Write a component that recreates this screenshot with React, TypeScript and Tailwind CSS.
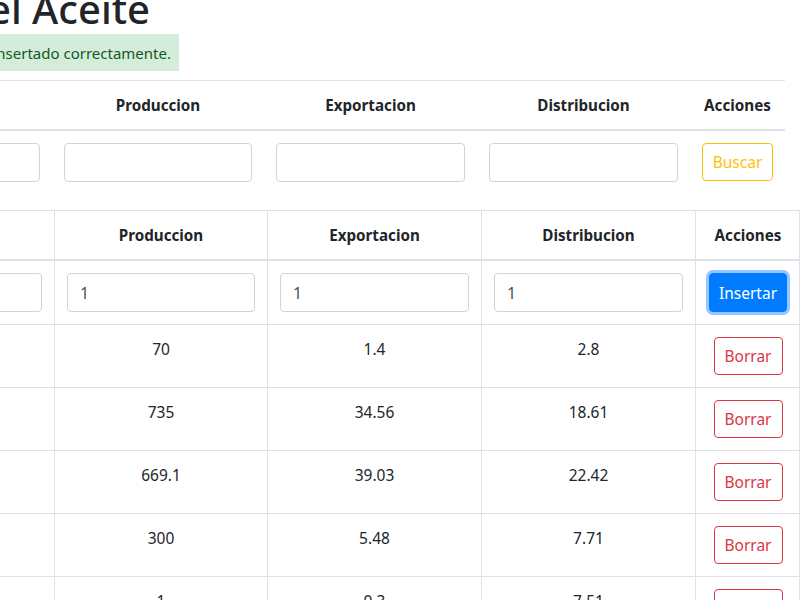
import React from "react";

const font = { fontFamily: '"Segoe UI", "Noto Sans", "Liberation Sans", sans-serif' };

const rows = [
  ["70", "1.4", "2.8"],
  ["735", "34.56", "18.61"],
  ["669.1", "39.03", "22.42"],
  ["300", "5.48", "7.71"],
  ["1", "0.3", "7.51"],
];

const Input = ({ value = "" }: { value?: string }) => (
  <input
    readOnly
    value={value}
    className="h-[39px] w-full rounded-[4px] border border-[#ced4da] bg-white px-3 text-[16px] text-[#495057] outline-none"
  />
);

const App = () => {
  return (
    <div style={font} className="h-[600px] w-[800px] overflow-hidden bg-white text-[15.5px] leading-6 text-[#212529]">
      {/* title, cut at the left edge */}
      <div className="-mt-[15px] flex w-[150px] justify-end overflow-hidden whitespace-nowrap">
        <h1 className="text-[40px] font-medium leading-[48px]">Datos del Aceite</h1>
      </div>

      <div className="mt-[1px] flex h-[37px] w-[179px] items-center justify-end overflow-hidden whitespace-nowrap bg-[#d4edda] pr-2 text-[15px] text-[#155724]">
        Dato insertado correctamente.
      </div>

      {/* search table */}
      <div className="mt-[9px] w-[785px] border-t border-[#dee2e6]">
        <div className="grid grid-cols-[52px_212px_213px_213px_95px] border-b-2 border-[#dee2e6] text-[15.2px] font-bold">
          <div className="h-[48px]" />
          <div className="flex h-[48px] items-center justify-center">Produccion</div>
          <div className="flex h-[48px] items-center justify-center">Exportacion</div>
          <div className="flex h-[48px] items-center justify-center">Distribucion</div>
          <div className="flex h-[48px] items-center justify-center">Acciones</div>
        </div>
        <div className="grid grid-cols-[52px_212px_213px_213px_95px] py-3">
          <div className="flex justify-end overflow-hidden pr-3">
            <div className="w-[188px] shrink-0">
              <Input />
            </div>
          </div>
          <div className="px-3"><Input /></div>
          <div className="px-3"><Input /></div>
          <div className="px-3"><Input /></div>
          <div className="flex justify-center">
            <button className="h-[38px] w-[71px] rounded-[4px] border border-[#ffc107] text-[#ffc107]">Buscar</button>
          </div>
        </div>
      </div>

      {/* data table */}
      <div className="mt-[16px] w-[800px] border-t border-r border-[#dee2e6]">
        <div className="grid grid-cols-[55px_213px_214px_214px_104px] border-b-2 border-[#dee2e6] text-[15.2px] font-bold">
          <div className="h-[48px] border-r border-[#dee2e6]" />
          <div className="flex h-[48px] items-center justify-center border-r border-[#dee2e6]">Produccion</div>
          <div className="flex h-[48px] items-center justify-center border-r border-[#dee2e6]">Exportacion</div>
          <div className="flex h-[48px] items-center justify-center border-r border-[#dee2e6]">Distribucion</div>
          <div className="flex h-[48px] items-center justify-center">Acciones</div>
        </div>
        <div className="grid grid-cols-[55px_213px_214px_214px_104px] border-b border-[#dee2e6]">
          <div className="flex justify-end overflow-hidden border-r border-[#dee2e6] py-3 pr-3">
            <div className="w-[188px] shrink-0">
              <Input />
            </div>
          </div>
          <div className="border-r border-[#dee2e6] p-3"><Input value="1" /></div>
          <div className="border-r border-[#dee2e6] p-3"><Input value="1" /></div>
          <div className="border-r border-[#dee2e6] p-3"><Input value="1" /></div>
          <div className="flex items-center justify-center">
            <button className="h-[39px] w-[78px] rounded-[4px] border border-[#007bff] bg-[#007bff] text-white ring-[3px] ring-[#268fff]/50">
              Insertar
            </button>
          </div>
        </div>
        {rows.map((r, i) => (
          <div key={i} className="grid grid-cols-[55px_213px_214px_214px_104px] border-b border-[#dee2e6]">
            <div className="border-r border-[#dee2e6]" />
            {r.map((v, j) => (
              <div key={j} className="border-r border-[#dee2e6] p-3 text-center">
                {v}
              </div>
            ))}
            <div className="flex justify-center p-3">
              <button className="h-[38px] w-[69px] rounded-[4px] border border-[#dc3545] text-[#dc3545]">Borrar</button>
            </div>
          </div>
        ))}
      </div>
    </div>
  );
};

export default App;
